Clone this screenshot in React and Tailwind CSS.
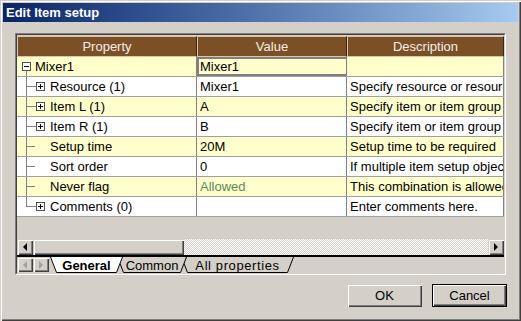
import React from 'react';

const raised =
  'shadow-[inset_1px_1px_0_#d4d0c8,inset_2px_2px_0_#ffffff,inset_-1px_-1px_0_#404040,inset_-2px_-2px_0_#808080]';

const rows = [
  { kind: 'root', label: 'Mixer1', value: 'Mixer1', desc: '', selected: true },
  { kind: 'branch', label: 'Resource (1)', value: 'Mixer1', desc: 'Specify resource or resource group' },
  { kind: 'branch', label: 'Item L (1)', value: 'A', desc: 'Specify item or item group' },
  { kind: 'branch', label: 'Item R (1)', value: 'B', desc: 'Specify item or item group' },
  { kind: 'leaf', label: 'Setup time', value: '20M', desc: 'Setup time to be required' },
  { kind: 'leaf', label: 'Sort order', value: '0', desc: 'If multiple item setup objects match' },
  { kind: 'leaf', label: 'Never flag', value: 'Allowed', desc: 'This combination is allowed', green: true },
  { kind: 'last', label: 'Comments (0)', value: '', desc: 'Enter comments here.' },
];

function TreeGlyph({ kind }) {
  const line = '#808080';
  if (kind === 'root') {
    return (
      <svg width="18" height="19" className="shrink-0">
        <rect x="5.5" y="5.5" width="8" height="8" fill="#fff" stroke="#505050" />
        <rect x="7" y="9" width="5" height="1" fill="#000" />
        <rect x="9" y="14" width="1" height="5" fill={line} />
      </svg>
    );
  }
  const hasBox = kind === 'branch' || kind === 'last';
  return (
    <svg width="33" height="19" className="shrink-0">
      <rect x="9" y="0" width="1" height={kind === 'last' ? 10 : 19} fill={line} />
      <rect x="10" y="9" width={hasBox ? 9 : 8} height="1" fill={line} />
      {hasBox && (
        <>
          <rect x="19.5" y="5.5" width="8" height="8" fill="#fff" stroke="#505050" />
          <rect x="21" y="9" width="5" height="1" fill="#000" />
          <rect x="23" y="7" width="1" height="5" fill="#000" />
        </>
      )}
    </svg>
  );
}

function Arrow({ dir, color = '#000' }) {
  const pts = dir === 'left' ? '6,8 10,4 10,12' : '6,4 10,8 6,12';
  return (
    <svg width="16" height="16" className="absolute inset-0">
      <polygon points={pts} fill={color} />
    </svg>
  );
}

function Tab({ label, width, active, className = '' }) {
  const w = width;
  return (
    <div className={`relative h-[16px] shrink-0 flex items-center justify-center ${className}`} style={{ width: w }}>
      <svg width={w} height="16" className="absolute inset-0">
        <polygon points={`0,0 6,15 ${w - 6},15 ${w},0`} fill={active ? '#ffffff' : '#d4d0c8'} />
        <polyline points={`0.5,0 6.5,15.5 ${w - 6.5},15.5 ${w - 0.5},0`} fill="none" stroke="#000" />
      </svg>
      <span className={`relative leading-[15px] ${active ? 'font-bold' : ''}`}>{label}</span>
    </div>
  );
}

export default function App() {
  return (
    <div
      className={`w-[521px] h-[321px] bg-[#d4d0c8] p-[3px] flex flex-col font-['Liberation_Sans',Arial,sans-serif] text-[13px] text-black ${raised}`}
    >
      <div className="h-[19px] shrink-0 bg-gradient-to-r from-[#0a246a] to-[#a6caf0] flex items-center pl-[3px]">
        <span className="text-white font-bold leading-[19px]">Edit Item setup</span>
      </div>

      <div className="ml-[12px] mt-[11px] w-[491px] h-[242px] shrink-0 border border-t-[#808080] border-l-[#808080] border-b-white border-r-white">
        <div className="h-full flex flex-col border border-t-[#404040] border-l-[#404040] border-b-[#d4d0c8] border-r-[#d4d0c8]">
          <div className="h-[22px] shrink-0 flex pt-[1px] bg-[#d4d0c8]">
            {[
              ['Property', 'w-[180px]'],
              ['Value', 'w-[150px]'],
              ['Description', 'w-[157px]'],
            ].map(([t, w]) => (
              <div
                key={t}
                className={`${w} h-full bg-[#7b5026] border border-[#d8c8a8] border-r-[#3a2512] text-[#f4efe6] flex items-center justify-center leading-none`}
              >
                {t}
              </div>
            ))}
          </div>

          {rows.map((r, i) => (
            <div
              key={i}
              className={`h-[20px] shrink-0 flex border-b border-[#a0a0a0] ${i % 2 === 0 ? 'bg-[#ffffcc]' : 'bg-white'}`}
            >
              <div className="w-[180px] shrink-0 flex items-center border-r border-[#808080] overflow-hidden whitespace-nowrap">
                <TreeGlyph kind={r.kind} />
                <span>{r.label}</span>
              </div>
              <div
                className={`w-[150px] shrink-0 flex items-center border-r border-[#808080] overflow-hidden whitespace-nowrap ${
                  r.selected ? 'border-2 border-[#10103a] pl-[1px]' : 'pl-[3px]'
                } ${r.green ? 'text-[#5a8a5a]' : ''}`}
              >
                {r.value}
              </div>
              <div className="w-[157px] shrink-0 flex items-center border-r border-[#808080] pl-[3px] overflow-hidden whitespace-nowrap">
                {r.desc}
              </div>
            </div>
          ))}

          <div className="flex-1" />

          <div className="h-[16px] shrink-0 flex">
            <div className={`relative w-[16px] h-[16px] bg-[#d4d0c8] ${raised}`}>
              <Arrow dir="left" />
            </div>
            <div className={`w-[151px] h-[16px] bg-[#d4d0c8] ${raised}`} />
            <div className="flex-1 h-[16px] bg-[conic-gradient(#ffffff_25%,#d4d0c8_0_50%,#ffffff_0_75%,#d4d0c8_0)] bg-[length:2px_2px]" />
            <div className={`relative w-[16px] h-[16px] bg-[#d4d0c8] ${raised}`}>
              <Arrow dir="right" />
            </div>
          </div>

          <div className="h-[2px] shrink-0 bg-black" />

          <div className="h-[16px] shrink-0 flex items-start">
            <div className={`relative w-[16px] h-[15px] bg-[#d4d0c8] ${raised}`}>
              <Arrow dir="left" color="#a0a0a0" />
            </div>
            <div className={`relative w-[16px] h-[15px] bg-[#d4d0c8] ${raised}`}>
              <Arrow dir="right" color="#a0a0a0" />
            </div>
            <div className="ml-[1px] flex">
              <Tab label="General" width={73} active className="z-30" />
              <Tab label="Common" width={70} className="-ml-[6px] z-20" />
              <Tab label="All properties" width={113} className="-ml-[6px] z-10 tracking-[0.6px]" />
            </div>
          </div>
        </div>
      </div>

      <div className="flex justify-end gap-[10px] mt-[9px] pr-[11px]">
        <button className={`w-[75px] h-[23px] bg-[#d4d0c8] ${raised}`}>OK</button>
        <button className="w-[75px] h-[23px] bg-[#d4d0c8] border border-black shadow-[inset_1px_1px_0_#ffffff,inset_-1px_-1px_0_#404040,inset_-2px_-2px_0_#808080]">
          Cancel
        </button>
      </div>
    </div>
  );
}
